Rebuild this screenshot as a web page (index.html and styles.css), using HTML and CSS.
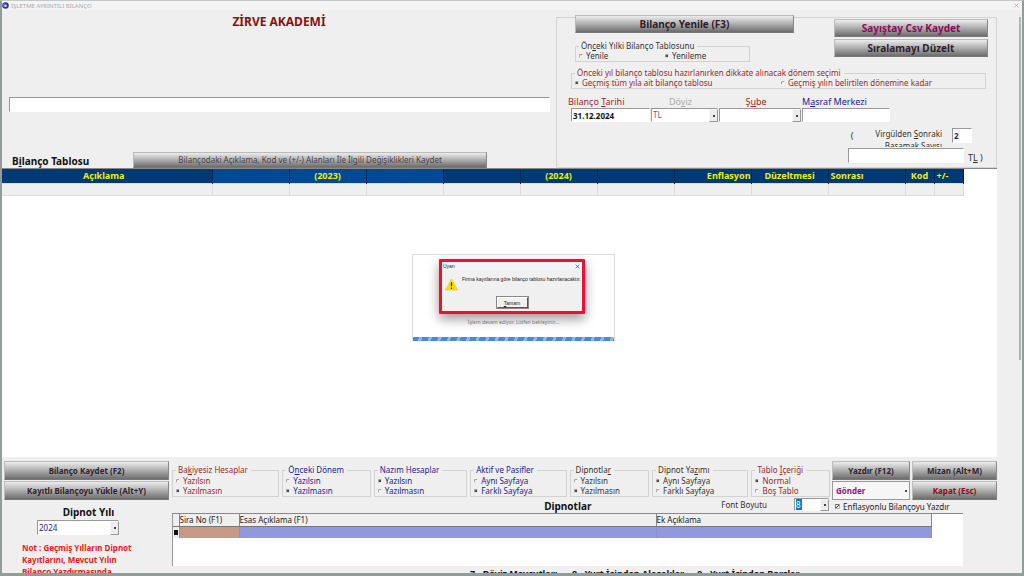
FILE: index.html
```html
<!DOCTYPE html>
<html lang="tr">
<head>
<meta charset="utf-8">
<title>İşletme Ayrıntılı Bilanço</title>
<link rel="stylesheet" href="styles.css">
</head>
<body>
<div class="window">
  <header class="titlebar">
    <svg class="app-icon" viewBox="0 0 14 14" aria-hidden="true"><circle cx="7" cy="7" r="6.5" fill="#3432a0"/><path d="M7 1A6 6 0 0 0 2 10Q6 9 7 1Z" fill="#5a5ad0"/><circle cx="7" cy="7.500" r="2.500" fill="#d8dcff"/></svg>
    <span class="title">İŞLETME AYRINTILI BİLANÇO</span>
    <button class="close" aria-label="Kapat"><svg viewBox="0 0 8 8"><path d="M1 1L7 7M7 1L1 7" stroke="currentColor" fill="none"/></svg></button>
  </header>

  <section class="top">
    <div class="top-left">
      <h1>ZİRVE AKADEMİ</h1>
      <input class="box search" type="text" aria-label="Açıklama">
      <div class="table-bar">
        <h2>B<u>i</u>lanço Tablosu</h2>
        <button class="btn btn-save">Bilançodaki Açıklama, Kod ve (+/-) Alanları İle İlgili Değişiklikleri Kaydet</button>
      </div>
    </div>

    <div class="panel">
      <div class="panel-head">
        <div class="head-left">
          <button class="btn btn-large">Bilanço Yenile (F3)</button>
          <fieldset class="group group-prev">
            <legend>Ön<u>c</u>eki Yılki Bilanço Tablosunu</legend>
            <label><input type="radio" name="prev">Yenile</label>
            <label><input type="radio" name="prev" checked>Yenileme</label>
          </fieldset>
        </div>
        <div class="head-right">
          <button class="btn btn-large plum">Sayıştay Csv Kaydet</button>
          <button class="btn btn-large">Sıralamayı Düzelt</button>
        </div>
      </div>
      <fieldset class="group group-term red">
        <legend>Önceki yıl bilanço tablosu hazırlanırken dikkate alınacak dönem seçimi</legend>
        <label><input type="radio" name="term" checked>Geçmiş tüm yıla ait bilanço tablosu</label>
        <label><input type="radio" name="term">Geçmiş yılın belirtilen dönemine kadar</label>
      </fieldset>
      <div class="fields">
        <div class="field red"><label for="tarih">Bilanço <u>T</u>arihi</label><input class="box bold" id="tarih" value="31.12.2024"></div>
        <div class="field muted center"><label for="doviz">Dö<u>v</u>iz</label><span class="select"><select class="box" id="doviz" disabled><option>TL</option></select></span></div>
        <div class="field red center"><label for="sube">Ş<u>u</u>be</label><span class="select"><select class="box" id="sube"><option></option></select></span></div>
        <div class="field blue"><label for="masraf">M<u>a</u>sraf Merkezi</label><input class="box" id="masraf"></div>
      </div>
      <div class="decimals">
        <span class="paren">(</span>
        <label class="clip" for="basamak">Virgülden <u>S</u>onraki<br>Basamak Sayısı</label>
        <input class="box digits" id="basamak" value="2">
      </div>
      <div class="amount"><input class="box" id="tutar"><label for="tutar">T<u>L</u> )</label></div>
    </div>
  </section>

  <main class="sheet">
    <table class="grid">
      <colgroup><col class="c-desc"><col span="9" class="c-num"><col span="2" class="c-code"></colgroup>
      <thead><tr><th>Açıklama</th><th class="lit"></th><th class="lit">(2023)</th><th class="lit"></th><th></th><th>(2024)</th><th></th><th class="end">Enflasyon</th><th>Düzeltmesi</th><th class="start">Sonrası</th><th>Kod</th><th class="start">+/-</th></tr></thead>
      <tbody><tr><td></td><td></td><td></td><td></td><td></td><td></td><td></td><td></td><td></td><td></td><td></td><td></td></tr></tbody>
    </table>
    <div class="progress">
      <div class="alert" role="alertdialog" aria-label="Uyarı">
        <div class="alert-title"><span>Uyarı</span><button class="alert-close" aria-label="Kapat"><svg viewBox="0 0 8 8"><path d="M1 1L7 7M7 1L1 7" stroke="currentColor" fill="none"/></svg></button></div>
        <div class="alert-body">
          <svg class="warn" viewBox="0 0 14 14" aria-hidden="true"><path d="M7 1L13.500 13H.5Z" fill="#ffdc00" stroke="#e8c000" stroke-width=".6" stroke-linejoin="round"/><path d="M7 4.500V9M7 10.300V11.800" stroke="#403a00" stroke-width="1.400"/></svg>
          <span>Firma kayıtlarına göre bilanço tablosu hazırlanacaktır.</span>
        </div>
        <button class="ok"><u>T</u>amam</button>
      </div>
      <p>İşlem devam ediyor. Lütfen bekleyiniz...</p>
      <div class="stripes"></div>
    </div>
  </main>

  <section class="bottom">
    <aside class="side">
      <button class="btn btn-medium">Bilanço Kaydet (F2)</button>
      <button class="btn btn-medium">Kayıtlı Bilançoyu Yükle (Alt+Y)</button>
      <label class="year-label" for="yil">Dipnot Yılı</label>
      <span class="select year"><select class="box" id="yil"><option>2024</option></select></span>
      <p class="note">Not : Geçmiş Yılların Dipnot Kayıtlarını, Mevcut Yılın Bilanço Yazdırmasında</p>
    </aside>

    <div class="work">
      <div class="options-area">
        <div class="options-main">
          <div class="options">
            <fieldset class="group red"><legend>Ba<u>k</u>iyesiz Hesaplar</legend><label><input type="radio" name="a">Yazılsın</label><label><input type="radio" name="a" checked>Yazılmasın</label></fieldset>
            <fieldset class="group blue"><legend>Ö<u>n</u>ceki Dönem</legend><label><input type="radio" name="b">Yazılsın</label><label><input type="radio" name="b" checked>Yazılmasın</label></fieldset>
            <fieldset class="group blue"><legend>Nazım Hesaplar</legend><label><input type="radio" name="c" checked>Yazılsın</label><label><input type="radio" name="c">Yazılmasın</label></fieldset>
            <fieldset class="group blue"><legend>Aktif ve Pasifler</legend><label><input type="radio" name="d">Aynı Sayfaya</label><label><input type="radio" name="d" checked>Farklı Sayfaya</label></fieldset>
            <fieldset class="group"><legend>Dipnotla<u>r</u></legend><label><input type="radio" name="e">Yazılsın</label><label><input type="radio" name="e" checked>Yazılmasın</label></fieldset>
            <fieldset class="group"><legend>Dipnot Ya<u>z</u>ımı</legend><label><input type="radio" name="f" checked>Aynı Sayfaya</label><label><input type="radio" name="f">Farklı Sayfaya</label></fieldset>
            <fieldset class="group red"><legend>Tablo <u>İ</u>çeriği</legend><label><input type="radio" name="g" checked>Normal</label><label><input type="radio" name="g">Boş Tablo</label></fieldset>
          </div>
          <div class="notes-bar">
            <h2>Dipnotlar</h2>
            <label for="font">Font Boyutu</label>
            <span class="select font"><select class="box" id="font"><option>8</option></select></span>
          </div>
        </div>
        <div class="actions">
          <button class="btn btn-medium">Yazdır (F12)</button>
          <button class="btn btn-medium">Mizan (Alt+M)</button>
          <span class="select send"><select class="box" aria-label="Gönder"><option>Gönder</option></select></span>
          <button class="btn btn-medium crimson">Kapat (Esc)</button>
          <label class="check"><input type="checkbox" checked>Enflasyonlu Bilançoyu Yazdır</label>
        </div>
      </div>
      <div class="notes">
        <table>
          <colgroup><col class="n-mark"><col class="n-no"><col class="n-main"><col class="n-extra"></colgroup>
          <thead><tr><th></th><th>Sira No (F1)</th><th>Esas Açıklama (F1)</th><th>Ek Açıklama</th></tr></thead>
          <tbody><tr><td class="mark"></td><td class="tan"></td><td></td><td></td></tr></tbody>
        </table>
      </div>
      <p class="footnote"><span>7 - Döviz Mevcutları,</span><span>8 - Yurt İçinden Alacaklar,</span><span>9 - Yurt İçinden Borçlar</span></p>
    </div>
  </section>
  <div class="scroll"></div>
</div>
</body>
</html>
```

FILE: styles.css
```css
* { box-sizing: border-box; }
body { margin: 0; font: 8px/10px "Noto Sans", "Open Sans", sans-serif; color: #333; background: #efefef; }
button, input, select { font: inherit; color: inherit; margin: 0; }
h1, h2, p { margin: 0; }
.window { position: relative; display: flex; flex-direction: column; height: 100vh; overflow: hidden; border: solid #919c9c; border-width: 1px 2px 3px; border-top-color: #c4c8c8; background: #efefef; }
.titlebar { display: flex; align-items: center; gap: 2px; height: 9px; flex: none; background: #f4f4f4; color: #aaa; font: 6px/8px "Noto Sans", sans-serif; }
.app-icon { width: 7px; height: 7px; }
.title { flex: 1; }
.close, .alert-close { border: 0; padding: 0; background: none; display: flex; color: #999; }
.close { margin-right: 3px; }
.close svg, .alert-close svg { width: 5px; height: 5px; }
.red { color: #a02828; }
.blue { color: #22229a; }
.muted { color: #aaa; }

.box { border: 1px solid #fff; border-top-color: #999; border-left-color: #999; border-radius: 0; background: #fff; padding: 0 1px; height: 14px; width: 100%; min-width: 0; display: block; }
.box:focus { outline: 0; }
.btn { border: 1px solid #bbb; border-bottom-color: #777; border-right-color: #888; border-radius: 0; padding: 0; background: linear-gradient(#ececec, #b4b4b4 45%, #6c6c6c); color: #30202a; font-weight: 700; text-align: center; white-space: nowrap; }
.btn-large { height: 18px; font-size: 10px; line-height: 16px; }
.btn-medium { height: 19px; line-height: 17px; }
.btn.plum { color: #8a0a58; }
.btn.crimson { color: #900a0a; }
.select { position: relative; display: block; }
.select select { appearance: none; opacity: 1; }
.select::after { content: ""; position: absolute; top: 1px; right: 0; bottom: 0; width: 7px; background: linear-gradient(#444, #444) center / 2px 2px no-repeat, #ececec; border: 1px solid #f8f8f8; border-right-color: #999; border-bottom-color: #999; }

.top { display: flex; flex: none; height: 158px; padding-right: 25px; }
.top-left { flex: 1; min-width: 0; display: flex; flex-direction: column; padding-top: 3px; }
h1 { color: #8b1010; font-size: 12px; line-height: 18px; text-align: center; }
.search { width: auto; margin: 66px 6px 0 7px; height: 15px; }
.table-bar { display: flex; align-items: flex-end; gap: 44px; margin-top: auto; padding: 0 69px 0 10px; }
h2 { color: #111; font-size: 10px; line-height: 16px; white-space: nowrap; }
.table-bar h2 { line-height: 14px; }
.btn-save { flex: 1; height: 16px; line-height: 14px; font-weight: 400; color: #484048; }
.panel { flex: 0 0 441px; display: flex; flex-direction: column; margin-top: 7px; border: 1px solid #d4d4d4; }
.panel-head { display: flex; justify-content: space-between; padding: 0 8px 0 18px; }
.head-left { width: 219px; margin-top: -3px; }
.head-left .btn { width: 100%; }
.head-right { width: 154px; display: flex; flex-direction: column; gap: 2px; padding-top: 1px; }
.group { border: 1px solid #d2d2d2; margin: 0; padding: 0 0 0 3px; min-width: 0; white-space: nowrap; }
.group legend { padding: 0 3px 0 2px; }
.group label { display: flex; align-items: center; gap: 3px; }
.group input { appearance: none; width: 4px; height: 4px; border: 1px solid #eee; border-top-color: #999; border-left-color: #999; border-radius: 2px; background: #fff; }
.group input:checked { background: #444; }
.group-prev, .group-term { display: grid; height: 21px; }
.group-prev { grid-template-columns: 86px 1fr; width: 175px; margin-top: 8px; }
.group-term { grid-template-columns: 206px 1fr; margin: 6px 10px 0 14px; flex: none; }
.fields { display: grid; grid-template-columns: 79px 67px 82px 88px; gap: 1px; margin: 7px 0 0 14px; }
.field label { display: block; font-size: 9px; line-height: 12px; white-space: nowrap; }
.field:first-child label { margin-left: -3px; }
.field.center label { text-align: center; padding-right: 8px; }
.bold { color: #111; font-weight: 700; }
.field select { color: #666; }
.decimals { display: flex; justify-content: flex-end; gap: 10px; margin: 6px 24px 0 0; height: 20px; }
.paren { padding-top: 3px; margin-right: 12px; font-size: 9px; }
.clip { height: 19px; line-height: 12px; overflow: hidden; text-align: right; }
.decimals .digits { width: 20px; height: 15px; color: #22229a; font-weight: 700; }
.amount { display: flex; align-items: flex-end; gap: 4px; margin-left: 291px; font-size: 9px; }
.amount .box { width: 116px; height: 15px; }

.sheet { position: relative; flex: 1; min-height: 0; margin-right: 25px; background: #fff; border-top: 1px solid #888; }
table { border-collapse: collapse; table-layout: fixed; }
.grid { width: 961px; }
.c-desc { width: 210px; }
.c-num { width: 77px; }
.c-code { width: 29px; }
.grid th { height: 14px; padding: 0 2px; background: #003a75; border-right: 1px solid #00285a; color: #eef000; font-size: 9px; line-height: 13px; text-align: center; }
.grid th:first-child { padding-right: 8px; }
.grid th.lit { background: #004a95; }
.grid th.end { text-align: right; padding-right: 0; }
.grid th.start { text-align: left; }
.grid td { height: 12px; padding: 0; background: #efefef; border: 1px solid #dcdcdc; border-left: 0; }
.progress { position: absolute; top: 85px; left: 0; right: 0; width: 203px; height: 87px; margin: 0 auto; transform: translateX(14px); border: 1px solid #ddd; border-bottom: 0; background: #fff; display: flex; flex-direction: column; align-items: center; }
.progress p { color: #777; font-size: 5px; line-height: 8px; margin: 4px 0 auto; }
.stripes { width: 100%; height: 4px; background: repeating-linear-gradient(110deg, #4a88d8 0 6px, #8cb6ea 6px 9px); }
.alert { width: 146px; height: 55px; margin: 4px 3px 0 0; border: 3px solid #ee1030; border-radius: 1px; background: #f0f0f0; box-shadow: 0 5px 12px #0006; font-family: "Liberation Sans", sans-serif; font-size: 5px; line-height: 8px; color: #222; display: flex; flex-direction: column; align-items: center; }
.alert-title { align-self: stretch; display: flex; justify-content: space-between; padding: 0 2px 0 1px; background: #f1f5fb; }
.alert-close { align-items: center; color: #333; }
.alert-body { display: flex; gap: 4px; align-self: stretch; padding: 5px 0 0 3px; height: 27px; white-space: nowrap; }
.warn { width: 13px; height: 13px; margin-top: 3px; flex: none; }
.ok { width: 31px; height: 11px; padding: 0; border: 1px solid #fff; border-right-color: #555; border-bottom-color: #555; outline: 1px solid #888; background: #f0f0f0; line-height: 8px; }

.bottom { flex: none; display: flex; gap: 3px; height: 116px; padding: 4px 25px 0 2px; overflow: hidden; }
.side { width: 165px; flex: none; display: flex; flex-direction: column; gap: 1px; }
.year-label { color: #111; font-size: 10px; font-weight: 700; line-height: 14px; text-align: center; margin: 4px 0 0; padding-left: 4px; }
.year { width: 82px; margin-left: 33px; flex: none; }
.year .box { height: 15px; color: #22229a; }
.note { margin: 6px 32px 0 18px; color: #f01818; font-weight: 700; line-height: 12px; }
.work { flex: 1; min-width: 0; display: flex; flex-direction: column; }
.options-area { display: flex; gap: 2px; height: 52px; flex: none; }
.options-main { flex: 1; min-width: 0; }
.options { display: grid; grid-template-columns: 108fr 89fr 94fr 97fr 80fr 97fr 79fr; gap: 3px; padding-top: 4px; }
.options .group { height: 32px; }
.options legend { margin-bottom: 1px; }
.notes-bar { display: flex; align-items: center; gap: 27px; height: 15px; padding-right: 1px; }
.notes-bar h2 { flex: 1; text-align: right; padding-right: 103px; padding-top: 3px; }
.font { width: 35px; }
.font .box { height: 13px; color: #fff; background: linear-gradient(#0878d8, #0878d8) 1px 0 / 6px 100% no-repeat, #fff; }
.actions { width: 165px; display: grid; grid-template-columns: 78px 1fr; gap: 1px 2px; align-content: start; }
.send .box { height: 19px; border-color: #999; color: #8c128c; background: #f6f6f6; font-weight: 700; padding-left: 3px; }
.send::after { background-color: #f6f6f6; border: 0; bottom: 1px; right: 1px; }
.check { grid-column: span 2; display: flex; align-items: center; gap: 3px; padding-left: 3px; line-height: 11px; color: #222; white-space: nowrap; }
.check input { appearance: none; width: 5px; height: 5px; border: 1px solid #bbb; border-top-color: #777; border-left-color: #777; background: linear-gradient(135deg, #fff 40%, #333 40% 65%, #fff 65%); }
.notes { height: 53px; flex: none; margin-right: 34px; background: #fff; border-top: 1px solid #888; border-left: 1px solid #999; }
.notes table { width: 758px; }
.n-mark { width: 6px; }
.n-no { width: 60px; }
.n-main { width: 417px; }
.n-extra { width: 275px; }
.notes th { height: 12px; padding: 0; background: #efefef; border-right: 1px solid #888; border-bottom: 1px solid #777; color: #222; font-weight: 400; line-height: 11px; text-align: left; white-space: nowrap; }
.notes td { height: 12px; padding: 0; background: #9298e0; border-right: 1px solid #8a8fce; }
.notes td.tan { background: #c69a84; }
.notes td.mark { background: linear-gradient(#111, #111) center / 4px 5px no-repeat, #efefef; }
.footnote { display: flex; gap: 12px; padding: 1px 0 0 298px; color: #111; font-size: 9px; font-weight: 700; line-height: 14px; white-space: nowrap; }
.scroll { position: absolute; top: 16px; right: 1px; width: 2px; height: 60%; background: #b4b4b4; }
```
